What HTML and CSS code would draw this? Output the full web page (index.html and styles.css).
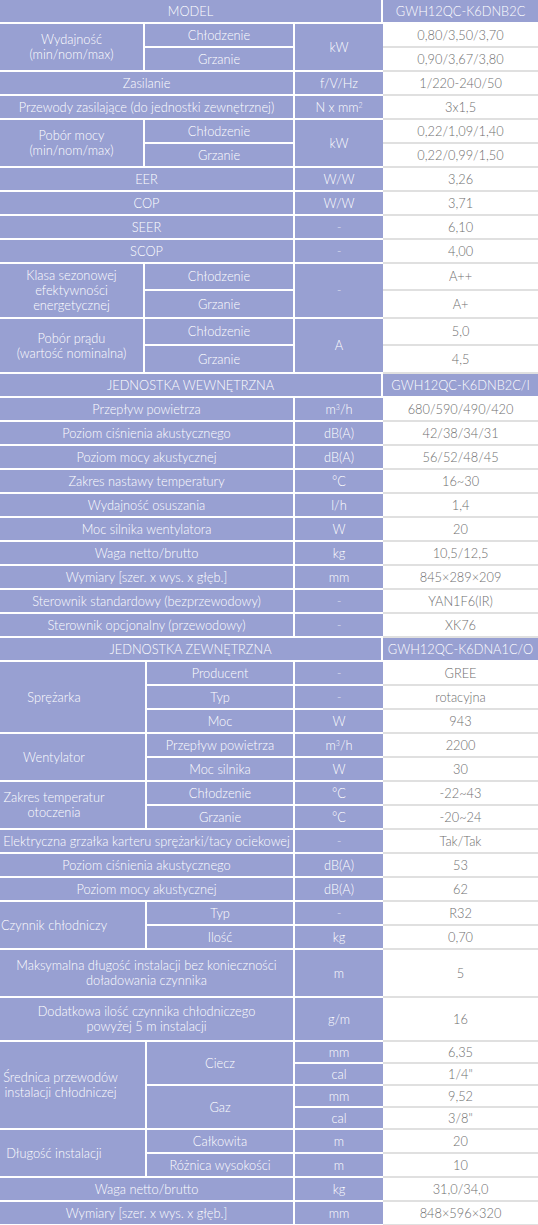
FILE: index.html
```html
<!DOCTYPE html>
<html lang="pl">
<head>
<meta charset="utf-8">
<title>GWH12QC-K6DNB2C</title>
<link rel="stylesheet" href="styles.css">
</head>
<body>
<table class="spec">
  <colgroup><col class="c1a"><col class="c2a"><col class="c3"><col class="c4"></colgroup>
  <tr><td class="p" colspan="3">MODEL</td><td class="h">GWH12QC-K6DNB2C</td></tr>
  <tr><td class="p" rowspan="2">Wydajność<br>(min/nom/max)</td><td class="p">Chłodzenie</td><td class="p u" rowspan="2">kW</td><td class="v">0,80/3,50/3,70</td></tr>
  <tr><td class="p">Grzanie</td><td class="v">0,90/3,67/3,80</td></tr>
  <tr><td class="p" colspan="2">Zasilanie</td><td class="p u">f/V/Hz</td><td class="v">1/220-240/50</td></tr>
  <tr><td class="p" colspan="2">Przewody zasilające (do jednostki zewnętrznej)</td><td class="p u">N x mm<sup>2</sup></td><td class="v">3x1,5</td></tr>
  <tr><td class="p" rowspan="2">Pobór mocy<br>(min/nom/max)</td><td class="p">Chłodzenie</td><td class="p u" rowspan="2">kW</td><td class="v">0,22/1,09/1,40</td></tr>
  <tr><td class="p">Grzanie</td><td class="v">0,22/0,99/1,50</td></tr>
  <tr><td class="p" colspan="2">EER</td><td class="p u">W/W</td><td class="v">3,26</td></tr>
  <tr><td class="p" colspan="2">COP</td><td class="p u">W/W</td><td class="v">3,71</td></tr>
  <tr><td class="p" colspan="2">SEER</td><td class="p u dash">-</td><td class="v">6,10</td></tr>
  <tr><td class="p" colspan="2">SCOP</td><td class="p u dash">-</td><td class="v">4,00</td></tr>
  <tr class="r27"><td class="p" rowspan="2">Klasa sezonowej<br>efektywności<br>energetycznej</td><td class="p">Chłodzenie</td><td class="p u dash" rowspan="2">-</td><td class="v">A++</td></tr>
  <tr class="r28"><td class="p">Grzanie</td><td class="v">A+</td></tr>
  <tr class="r27"><td class="p" rowspan="2">Pobór prądu<br>(wartość nominalna)</td><td class="p">Chłodzenie</td><td class="p u" rowspan="2">A</td><td class="v">5,0</td></tr>
  <tr class="r28"><td class="p">Grzanie</td><td class="v">4,5</td></tr>
  <tr><td class="p" colspan="3">JEDNOSTKA WEWNĘTRZNA</td><td class="h">GWH12QC-K6DNB2C/I</td></tr>
  <tr><td class="p" colspan="2">Przepływ powietrza</td><td class="p u">m<sup>3</sup>/h</td><td class="v">680/590/490/420</td></tr>
  <tr><td class="p" colspan="2">Poziom ciśnienia akustycznego</td><td class="p u">dB(A)</td><td class="v">42/38/34/31</td></tr>
  <tr><td class="p" colspan="2">Poziom mocy akustycznej</td><td class="p u">dB(A)</td><td class="v">56/52/48/45</td></tr>
  <tr><td class="p" colspan="2">Zakres nastawy temperatury</td><td class="p u">°C</td><td class="v">16~30</td></tr>
  <tr><td class="p" colspan="2">Wydajność osuszania</td><td class="p u">l/h</td><td class="v">1,4</td></tr>
  <tr><td class="p" colspan="2">Moc silnika wentylatora</td><td class="p u">W</td><td class="v">20</td></tr>
  <tr><td class="p" colspan="2">Waga netto/brutto</td><td class="p u">kg</td><td class="v">10,5/12,5</td></tr>
  <tr><td class="p" colspan="2">Wymiary [szer. x wys. x głęb.]</td><td class="p u">mm</td><td class="v">845×289×209</td></tr>
  <tr><td class="p" colspan="2">Sterownik standardowy (bezprzewodowy)</td><td class="p u dash">-</td><td class="v">YAN1F6(IR)</td></tr>
  <tr><td class="p" colspan="2">Sterownik opcjonalny (przewodowy)</td><td class="p u dash">-</td><td class="v">XK76</td></tr>
</table>
<table class="spec">
  <colgroup><col class="c1b"><col class="c2b"><col class="c3"><col class="c4"></colgroup>
  <tr><td class="p" colspan="3">JEDNOSTKA ZEWNĘTRZNA</td><td class="h">GWH12QC-K6DNA1C/O</td></tr>
  <tr><td class="p" rowspan="3"><div class="shift">Sprężarka</div></td><td class="p">Producent</td><td class="p u dash">-</td><td class="v">GREE</td></tr>
  <tr><td class="p">Typ</td><td class="p u dash">-</td><td class="v">rotacyjna</td></tr>
  <tr><td class="p">Moc</td><td class="p u">W</td><td class="v">943</td></tr>
  <tr><td class="p" rowspan="2"><div class="shift">Wentylator</div></td><td class="p">Przepływ powietrza</td><td class="p u">m<sup>3</sup>/h</td><td class="v">2200</td></tr>
  <tr><td class="p">Moc silnika</td><td class="p u">W</td><td class="v">30</td></tr>
  <tr><td class="p" rowspan="2"><div class="shift">Zakres temperatur<br>otoczenia</div></td><td class="p">Chłodzenie</td><td class="p u">°C</td><td class="v">-22~43</td></tr>
  <tr><td class="p">Grzanie</td><td class="p u">°C</td><td class="v">-20~24</td></tr>
  <tr><td class="p" colspan="2">Elektryczna grzałka karteru sprężarki/tacy ociekowej</td><td class="p u dash">-</td><td class="v">Tak/Tak</td></tr>
  <tr><td class="p" colspan="2">Poziom ciśnienia akustycznego</td><td class="p u">dB(A)</td><td class="v">53</td></tr>
  <tr><td class="p" colspan="2">Poziom mocy akustycznej</td><td class="p u">dB(A)</td><td class="v">62</td></tr>
  <tr><td class="p" rowspan="2"><div class="shift">Czynnik chłodniczy</div></td><td class="p">Typ</td><td class="p u dash">-</td><td class="v">R32</td></tr>
  <tr><td class="p">Ilość</td><td class="p u">kg</td><td class="v">0,70</td></tr>
  <tr class="r48"><td class="p" colspan="2">Maksymalna długość instalacji bez konieczności<br>doładowania czynnika</td><td class="p u">m</td><td class="v">5</td></tr>
  <tr class="r44"><td class="p" colspan="2">Dodatkowa ilość czynnika chłodniczego<br>powyżej 5 m instalacji</td><td class="p u">g/m</td><td class="v">16</td></tr>
  <tr class="r22"><td class="p" rowspan="4"><div class="shift-s">Średnica przewodów<br>instalacji chłodniczej</div></td><td class="p" rowspan="2">Ciecz</td><td class="p u">mm</td><td class="v">6,35</td></tr>
  <tr class="r22"><td class="p u">cal</td><td class="v">1/4"</td></tr>
  <tr class="r22"><td class="p" rowspan="2">Gaz</td><td class="p u">mm</td><td class="v">9,52</td></tr>
  <tr class="r22"><td class="p u">cal</td><td class="v">3/8"</td></tr>
  <tr><td class="p" rowspan="2"><div class="shift">Długość instalacji</div></td><td class="p">Całkowita</td><td class="p u">m</td><td class="v">20</td></tr>
  <tr><td class="p">Różnica wysokości</td><td class="p u">m</td><td class="v">10</td></tr>
  <tr><td class="p" colspan="2">Waga netto/brutto</td><td class="p u">kg</td><td class="v">31,0/34,0</td></tr>
  <tr><td class="p" colspan="2">Wymiary [szer. x wys. x głęb.]</td><td class="p u">mm</td><td class="v">848×596×320</td></tr>
</table>
</body>
</html>
```

FILE: styles.css
```css
html, body {
  margin: 0;
  padding: 0;
  background: #ffffff;
}

body {
  width: 538px;
  overflow: hidden;
  font-family: Lato, "Noto Sans", "Liberation Sans", sans-serif;
  font-size: 12.8px;
  font-weight: 300;
}

.spec {
  width: 538px;
  table-layout: fixed;
  border-collapse: separate;
  border-spacing: 0;
}

.c1a { width: 145px; }
.c2a { width: 150px; }
.c1b { width: 147px; }
.c2b { width: 148px; }
.c3 { width: 88px; }
.c4 { width: 155px; }

.spec tr { height: 24px; }
.spec tr.r22 { height: 22px; }
.spec tr.r27 { height: 27px; }
.spec tr.r28 { height: 28px; }
.spec tr.r44 { height: 44px; }
.spec tr.r48 { height: 48px; }

.spec td {
  padding: 0;
  text-align: center;
  vertical-align: middle;
  line-height: 15px;
  white-space: nowrap;
  box-sizing: border-box;
}

.p {
  background: #98a0d2;
  color: #ffffff;
  border-right: 2px solid #ffffff;
  border-bottom: 2px solid #ffffff;
}

.u {
  border-right: 0;
}

.dash {
  color: rgba(255, 255, 255, 0.7);
}

.h {
  background: #98a0d2;
  color: #ffffff;
  border-bottom: 2px solid #ffffff;
}

.v {
  background: #ffffff;
  color: #6e6e6e;
  border-bottom: 2px solid #e0e0e0;
}

.shift {
  margin-left: -37px;
}

.shift-s {
  margin-left: -24px;
}

sup {
  font-size: 7px;
  line-height: 0;
  vertical-align: 4px;
}
```
